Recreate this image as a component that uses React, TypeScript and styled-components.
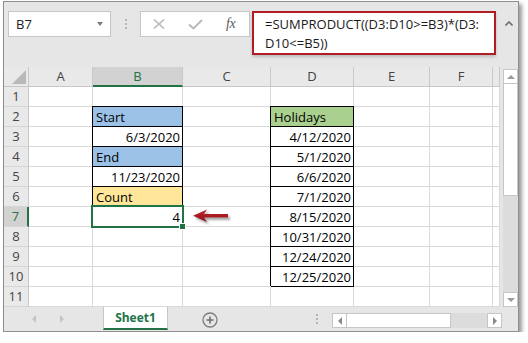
import { Fragment } from "react";
import styled, { createGlobalStyle, css } from "styled-components";

const GlobalStyle = createGlobalStyle`
  html, body {
    margin: 0;
    padding: 0;
    background: #fff;
  }
  body {
    font-family: "Open Sans", "Liberation Sans", sans-serif;
  }
`;

const GREEN = "#217346";

const Page = styled.div`
  padding: 1px 0 0 3px;
`;

const Window = styled.div`
  width: 516px;
  height: 331px;
  box-sizing: border-box;
  border: 1px solid #8f8f8f;
  background: #e6e6e6;
  box-shadow: 3px 3px 4px rgba(0, 0, 0, 0.4);
  display: flex;
  flex-direction: column;
`;

/* ---------- formula bar ---------- */
const FormulaBar = styled.div`
  height: 65px;
  flex-shrink: 0;
  box-sizing: border-box;
  padding: 9px 0 0 4px;
  display: flex;
  align-items: flex-start;
`;
const NameBox = styled.div`
  width: 103px;
  height: 26px;
  box-sizing: border-box;
  border: 1px solid #c6c6c6;
  background: #fff;
  padding: 0 7px;
  display: flex;
  align-items: center;
  justify-content: space-between;
  font-size: 13px;
  color: #222;
`;
const DropTri = styled.span`
  width: 0;
  height: 0;
  border-left: 3.5px solid transparent;
  border-right: 3.5px solid transparent;
  border-top: 4px solid #7a7a7a;
`;
const Grip = styled.div<{ $ml: number; $mr: number; $top: number }>`
  margin: ${(p) => p.$top}px ${(p) => p.$mr}px 0 ${(p) => p.$ml}px;
  display: flex;
  flex-direction: column;
  gap: 2px;
  span {
    width: 2px;
    height: 2px;
    background: #b5b5b5;
  }
`;
const FxBox = styled.div`
  width: 110px;
  height: 26px;
  box-sizing: border-box;
  border: 1px solid #c6c6c6;
  background: #fff;
  padding-left: 12px;
  display: flex;
  align-items: center;
  gap: 23px;
`;
const FxText = styled.span`
  font-family: "Liberation Serif", serif;
  font-style: italic;
  font-size: 14px;
  color: #5a5a5a;
  letter-spacing: -0.5px;
`;
const FormulaBox = styled.div`
  margin-left: 2px;
  width: 244px;
  height: 44px;
  box-sizing: border-box;
  border: 2px solid #b01e23;
  background: #fff;
  box-shadow: 0 2px 3px rgba(0, 0, 0, 0.18);
  padding: 2px 8px 0 11px;
  font-size: 13px;
  line-height: 19px;
  color: #1a1a1a;
  word-break: break-all;
`;
const CaretZone = styled.div`
  flex: 1;
  display: flex;
  justify-content: center;
  padding: 10px 0 0 4px;
`;

/* ---------- sheet ---------- */
const Main = styled.div`
  display: flex;
  height: 240px;
  flex-shrink: 0;
`;
const Sheet = styled.div`
  position: relative;
`;
const Grid = styled.div`
  display: grid;
  grid-template-columns: 25px 64px 90px 88px 83px 76px 63px 7px;
  grid-auto-rows: 20px;
  background: #fff;
`;
const Corner = styled.div`
  box-sizing: border-box;
  background: #e9e9e9;
  border-right: 1px solid #c8c8c8;
  border-bottom: 1px solid #c8c8c8;
  display: flex;
  align-items: flex-end;
  justify-content: flex-end;
  padding: 0 2px 2px 0;
`;
const CornerMark = styled.span`
  width: 0;
  height: 0;
  border-left: 14px solid transparent;
  border-bottom: 14px solid #b9b9b9;
`;
const ColHead = styled.div<{ $active?: boolean }>`
  box-sizing: border-box;
  background: ${(p) => (p.$active ? "#d2d2d2" : "#e9e9e9")};
  border-right: 1px solid #c8c8c8;
  border-bottom: ${(p) => (p.$active ? `2px solid ${GREEN}` : "1px solid #c8c8c8")};
  color: ${(p) => (p.$active ? GREEN : "#444")};
  font-size: 13px;
  line-height: 19px;
  text-align: center;
`;
const RowHead = styled.div<{ $active?: boolean }>`
  box-sizing: border-box;
  background: ${(p) => (p.$active ? "#d2d2d2" : "#e9e9e9")};
  border-right: ${(p) => (p.$active ? `2px solid ${GREEN}` : "1px solid #c8c8c8")};
  border-bottom: 1px solid #d6d6d6;
  color: ${(p) => (p.$active ? GREEN : "#444")};
  font-size: 13px;
  line-height: 19px;
  text-align: center;
`;

const FILLS: Record<string, string> = {
  blue: "#9bc2e6",
  green: "#a9d08e",
  yellow: "#ffe699",
};

interface ICellProps {
  $fill?: string;
  $right?: boolean;
  $boxed?: boolean;
  $selected?: boolean;
}
const Cell = styled.div<ICellProps>`
  box-sizing: border-box;
  background: ${(p) => (p.$fill ? FILLS[p.$fill] : "#fff")};
  border-right: 1px solid ${(p) => (p.$boxed ? "#000" : "#d9d9d9")};
  border-bottom: 1px solid ${(p) => (p.$boxed ? "#000" : "#d9d9d9")};
  padding: 2px 2px 0 3px;
  font-size: 13px;
  line-height: 17px;
  color: #000;
  white-space: nowrap;
  overflow: hidden;
  text-align: ${(p) => (p.$right ? "right" : "left")};
  ${(p) =>
    p.$boxed &&
    css`
      box-shadow: -1px -1px 0 #000, 0 -1px 0 #000;
    `}
  ${(p) =>
    p.$selected &&
    css`
      position: relative;
      overflow: visible;
      &::after {
        content: "";
        position: absolute;
        top: -2px;
        left: -2px;
        right: -2px;
        bottom: -2px;
        border: 2px solid ${GREEN};
        z-index: 2;
      }
      &::before {
        content: "";
        position: absolute;
        right: -4px;
        bottom: -4px;
        width: 5px;
        height: 5px;
        background: ${GREEN};
        border: 1px solid #fff;
        z-index: 3;
      }
    `}
`;
const ArrowMark = styled.svg`
  position: absolute;
  left: 187px;
  top: 140px;
`;

const VScroll = styled.div`
  flex: 1;
  display: flex;
  flex-direction: column;
  padding: 2px 1px 0 3px;
`;
const ArrowBtn = styled.div`
  box-sizing: border-box;
  width: 15px;
  height: 15px;
  flex-shrink: 0;
  border: 1px solid #c6c6c6;
  background: #fff;
  display: flex;
  align-items: center;
  justify-content: center;
`;
const VThumb = styled.div`
  height: 112px;
  box-sizing: border-box;
  border: 1px solid #c6c6c6;
  border-top: none;
  background: #fff;
`;
const VTrack = styled.div`
  flex: 1;
  background: #dcdcdc;
`;
const Tri = styled.span<{ $dir: "up" | "down" | "left" | "right"; $color?: string }>`
  width: 0;
  height: 0;
  ${(p) => {
    const c = p.$color || "#8a8a8a";
    if (p.$dir === "up")
      return css`border-left: 4px solid transparent; border-right: 4px solid transparent; border-bottom: 4px solid ${c};`;
    if (p.$dir === "down")
      return css`border-left: 4px solid transparent; border-right: 4px solid transparent; border-top: 4px solid ${c};`;
    if (p.$dir === "left")
      return css`border-top: 4px solid transparent; border-bottom: 4px solid transparent; border-right: 4px solid ${c};`;
    return css`border-top: 4px solid transparent; border-bottom: 4px solid transparent; border-left: 4px solid ${c};`;
  }}
`;

/* ---------- tabs ---------- */
const TabBar = styled.div`
  flex: 1;
  display: flex;
  align-items: flex-start;
`;
const TabNav = styled.div`
  width: 99px;
  height: 24px;
  display: flex;
  align-items: center;
  padding-left: 28px;
  box-sizing: border-box;
  gap: 24px;
`;
const SheetTab = styled.div`
  width: 65px;
  height: 23px;
  box-sizing: border-box;
  background: #fff;
  border-left: 1px solid #c6c6c6;
  border-right: 1px solid #c6c6c6;
  border-bottom: 2px solid ${GREEN};
  color: ${GREEN};
  font-weight: 700;
  font-size: 12px;
  line-height: 21px;
  text-align: center;
`;
const AddSheet = styled.svg`
  margin: 5px 0 0 34px;
`;
const HScroll = styled.div`
  margin: 6px 0 0 14px;
  width: 170px;
  height: 15px;
  display: flex;
`;
const HThumb = styled.div`
  width: 104px;
  box-sizing: border-box;
  border: 1px solid #c6c6c6;
  border-left: none;
  background: #fff;
`;
const HTrack = styled.div`
  flex: 1;
  background: #dcdcdc;
`;

interface ICell {
  text?: string;
  fill?: string;
  right?: boolean;
  boxed?: boolean;
  selected?: boolean;
}

const LETTERS = ["A", "B", "C", "D", "E", "F", "G"];
const ROWS = [1, 2, 3, 4, 5, 6, 7, 8, 9, 10, 11];

const holidays = ["4/12/2020", "5/1/2020", "6/6/2020", "7/1/2020", "8/15/2020", "10/31/2020", "12/24/2020", "12/25/2020"];

const cells: Record<string, ICell> = {
  B2: { text: "Start", fill: "blue", boxed: true },
  B3: { text: "6/3/2020", right: true, boxed: true },
  B4: { text: "End", fill: "blue", boxed: true },
  B5: { text: "11/23/2020", right: true, boxed: true },
  B6: { text: "Count", fill: "yellow", boxed: true },
  B7: { text: "4", right: true, boxed: true, selected: true },
  D2: { text: "Holidays", fill: "green", boxed: true },
};
holidays.forEach((d, i) => {
  cells[`D${i + 3}`] = { text: d, right: true, boxed: true };
});

function App() {
  return (
    <Page>
      <GlobalStyle />
      <Window>
        <FormulaBar>
          <NameBox>
            B7
            <DropTri />
          </NameBox>
          <Grip $ml={14} $mr={13} $top={8}>
            <span />
            <span />
            <span />
          </Grip>
          <FxBox>
            <svg width="12" height="10" viewBox="0 0 12 10">
              <path d="M1 0.5 L11 9.5 M11 0.5 L1 9.5" stroke="#b9b9b9" strokeWidth="1.6" />
            </svg>
            <svg width="15" height="11" viewBox="0 0 15 11">
              <path d="M1 5.5 L5.5 9.5 L14 1" stroke="#b9b9b9" strokeWidth="2" fill="none" />
            </svg>
            <FxText>fx</FxText>
          </FxBox>
          <FormulaBox>=SUMPRODUCT((D3:D10&gt;=B3)*(D3: D10&lt;=B5))</FormulaBox>
          <CaretZone>
            <svg width="8" height="5" viewBox="0 0 8 5">
              <path d="M0.5 4.5 L4 1 L7.5 4.5" stroke="#6f6f6f" strokeWidth="1.6" fill="none" />
            </svg>
          </CaretZone>
        </FormulaBar>

        <Main>
          <Sheet>
            <Grid>
              <Corner>
                <CornerMark />
              </Corner>
              {LETTERS.map((l) => (
                <ColHead key={l} $active={l === "B"}>
                  {l === "G" ? "" : l}
                </ColHead>
              ))}
              {ROWS.map((r) => (
                <Fragment key={r}>
                  <RowHead $active={r === 7}>{r}</RowHead>
                  {LETTERS.map((l) => {
                    const c = cells[`${l}${r}`];
                    return (
                      <Cell
                        key={l}
                        $fill={c?.fill}
                        $right={c?.right}
                        $boxed={c?.boxed}
                        $selected={c?.selected}
                      >
                        {c?.text}
                      </Cell>
                    );
                  })}
                </Fragment>
              ))}
            </Grid>
            <ArrowMark width="46" height="22" viewBox="0 0 46 22">
              <defs>
                <linearGradient id="arrowFill" x1="0" y1="0" x2="0" y2="1">
                  <stop offset="0" stopColor="#c2262b" />
                  <stop offset="1" stopColor="#8e1216" />
                </linearGradient>
                <filter id="arrowBlur" x="-20%" y="-40%" width="140%" height="180%">
                  <feGaussianBlur stdDeviation="1" />
                </filter>
              </defs>
              <path
                d="M4 11 L18 4.5 L15 9.5 L39 9.5 L39 13 L15 13 L18 17.5 Z"
                fill="rgba(0,0,0,0.35)"
                filter="url(#arrowBlur)"
              />
              <path d="M2 8.75 L16 2.5 L13 7 L37 7 L37 10.5 L13 10.5 L16 15 Z" fill="url(#arrowFill)" />
            </ArrowMark>
          </Sheet>
          <VScroll>
            <ArrowBtn>
              <Tri $dir="up" $color="#9a9a9a" />
            </ArrowBtn>
            <VThumb />
            <VTrack />
            <ArrowBtn>
              <Tri $dir="down" $color="#9a9a9a" />
            </ArrowBtn>
          </VScroll>
        </Main>

        <TabBar>
          <TabNav>
            <Tri $dir="left" $color="#c4c4c4" />
            <Tri $dir="right" $color="#c4c4c4" />
          </TabNav>
          <SheetTab>Sheet1</SheetTab>
          <AddSheet width="16" height="16" viewBox="0 0 16 16">
            <circle cx="8" cy="8" r="7" fill="none" stroke="#7d7d7d" strokeWidth="1.3" />
            <path d="M8 4.5 V11.5 M4.5 8 H11.5" stroke="#6d6d6d" strokeWidth="1.6" />
          </AddSheet>
          <Grip $ml={98} $mr={0} $top={7}>
            <span />
            <span />
            <span />
          </Grip>
          <HScroll>
            <ArrowBtn>
              <Tri $dir="left" $color="#8a8a8a" />
            </ArrowBtn>
            <HThumb />
            <HTrack />
            <ArrowBtn>
              <Tri $dir="right" $color="#8a8a8a" />
            </ArrowBtn>
          </HScroll>
        </TabBar>
      </Window>
    </Page>
  );
}

export default App;
